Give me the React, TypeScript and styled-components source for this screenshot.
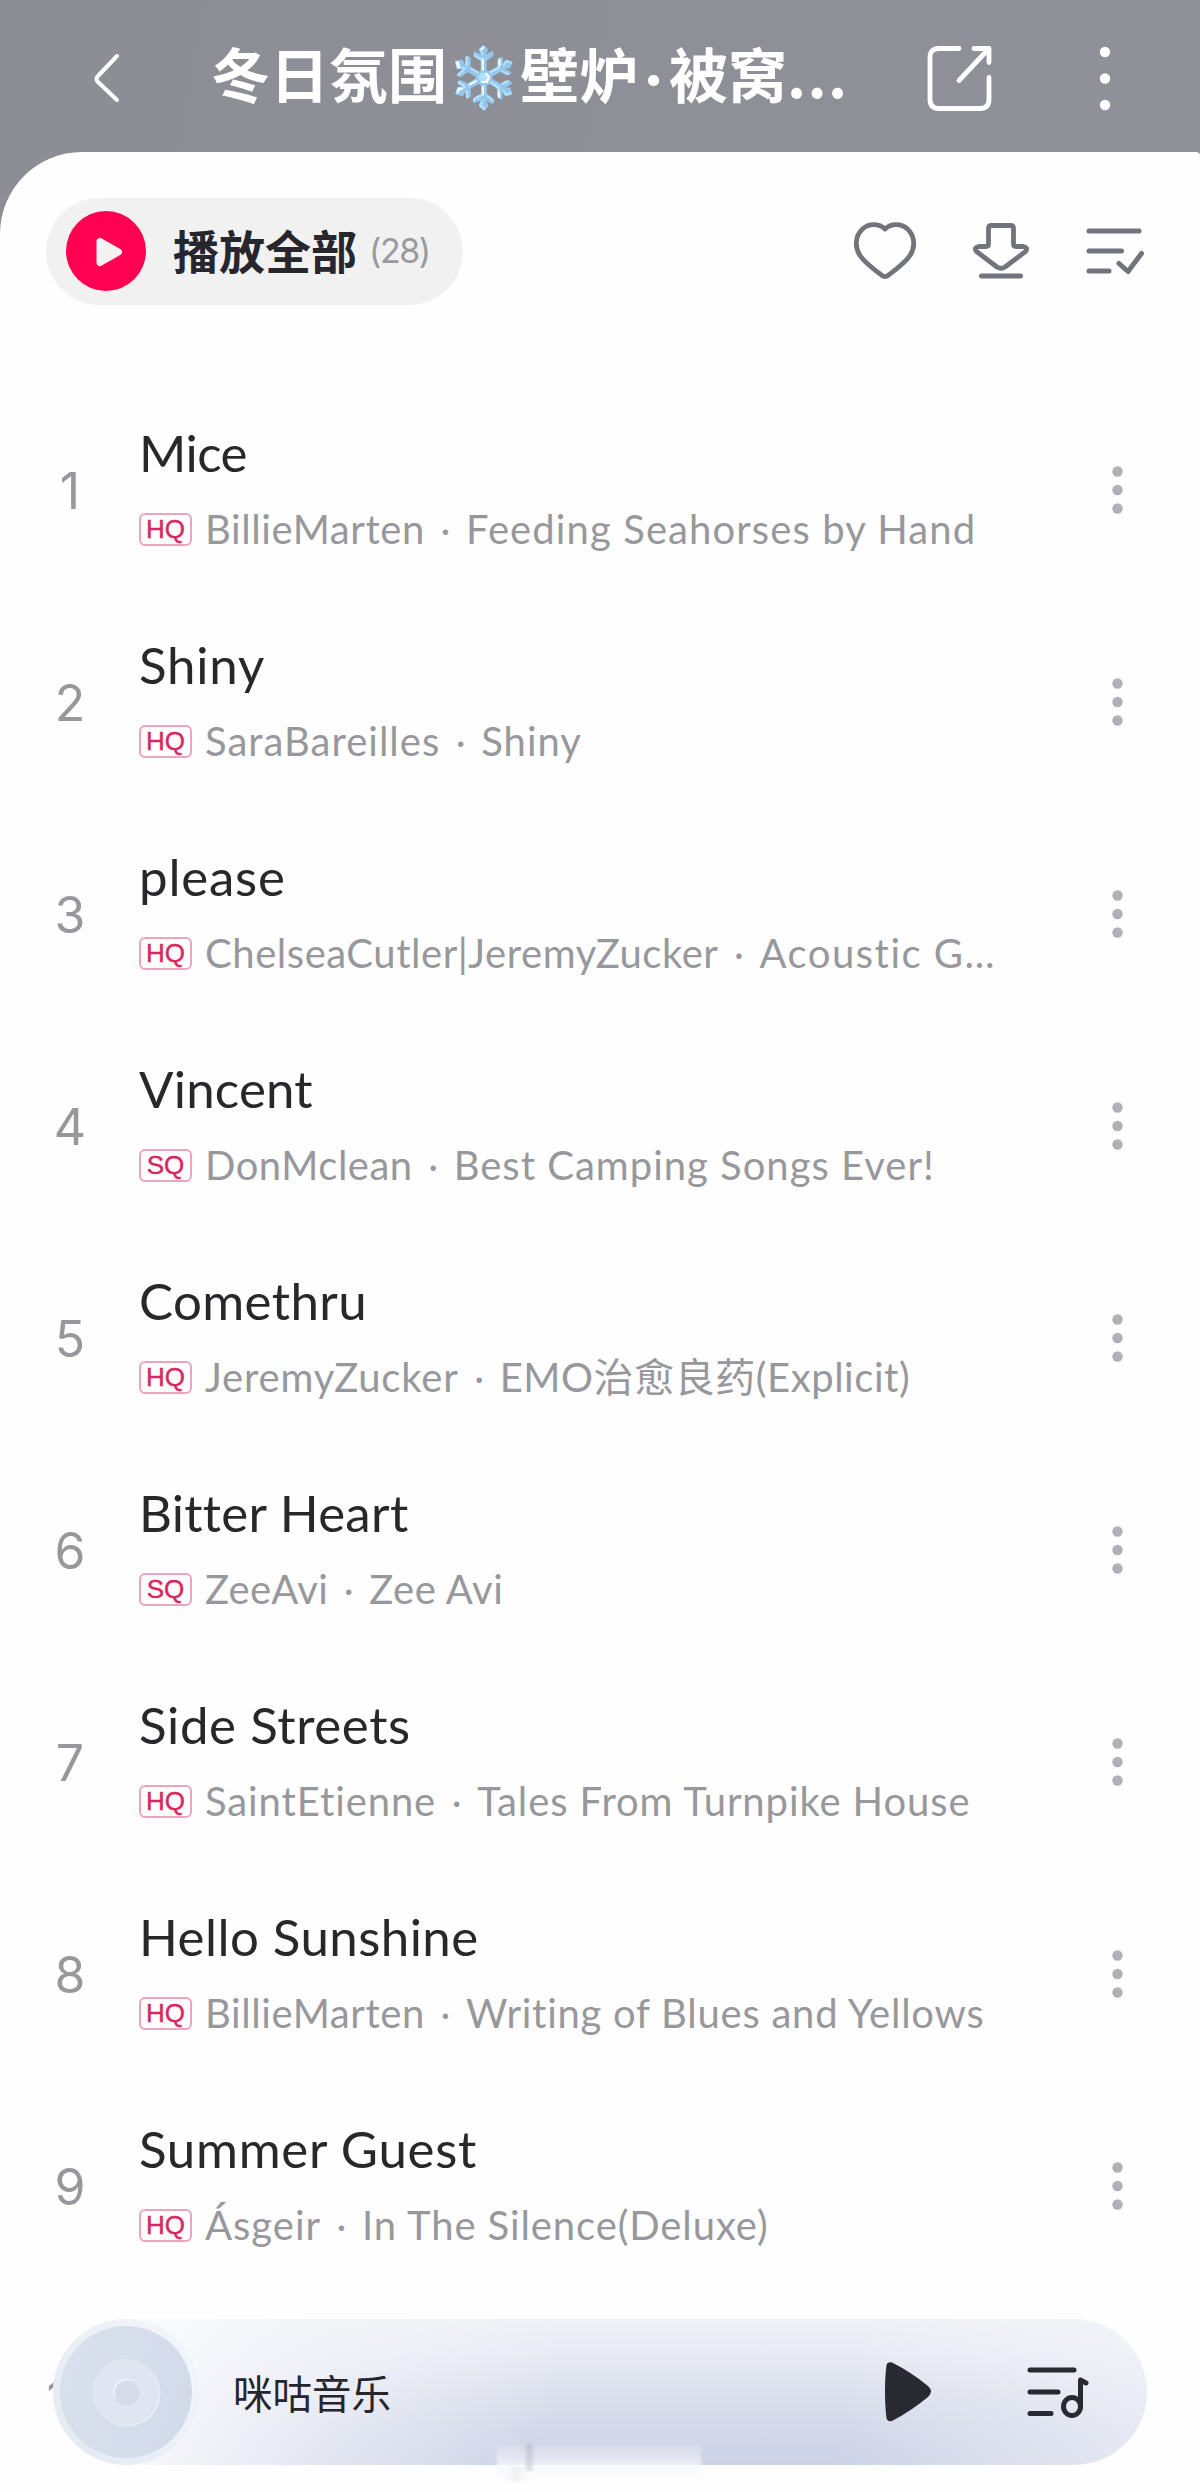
import React from "react";
import styled, { createGlobalStyle } from "styled-components";

const latin = `Lato, "Noto Sans CJK SC", sans-serif`;
const cjk = `"Noto Sans CJK SC", sans-serif`;

const Global = createGlobalStyle`
  *, *::before, *::after { box-sizing: border-box; }
  body { margin: 0; background: #fefefe; }
`;

const Screen = styled.div`
  position: relative;
  display: flex;
  flex-direction: column;
  width: 1200px;
  height: 2492px;
  overflow: hidden;
  background: linear-gradient(100deg, #8d8d95 0%, #919199 100%);
`;

const Header = styled.header`
  display: flex;
  align-items: center;
  flex: none;
  height: 152px;
  padding: 4px 89px 0 90px;
`;

const HeaderTitle = styled.h1`
  flex: none;
  width: 640px;
  margin: 0 0 7px 89px;
  font: 700 59px/84px ${cjk};
  color: #fff;
  white-space: nowrap;
`;

const MiddleDot = styled.span`
  display: inline-block;
  width: 31px;
  font-family: Lato, sans-serif;
  text-align: center;
`;

const TitleEllipsis = styled.span`
  letter-spacing: 1.3px;
`;

const HeaderIcons = styled.div`
  display: flex;
  align-items: center;
  gap: 104px;
  margin-left: auto;
`;

const Sheet = styled.main`
  display: flex;
  flex-direction: column;
  flex: 1;
  background: #fefefe;
  border-radius: 82px 4px 0 0;
`;

const Toolbar = styled.div`
  display: flex;
  align-items: center;
  justify-content: space-between;
  height: 107px;
  margin-top: 46px;
  padding: 0 55px 0 46px;
`;

const PlayAll = styled.button`
  display: flex;
  align-items: center;
  width: 417px;
  height: 107px;
  padding: 0 0 2px 20px;
  border: 0;
  border-radius: 54px;
  background: #f1f1f1;
`;

const PlayAllLabel = styled.span`
  margin: 0 0 3px 27px;
  font: 700 46px/60px ${cjk};
  color: #26262c;
`;

const PlayAllCount = styled.span`
  margin-left: 12px;
  font: 400 34px/60px Inter, sans-serif;
  letter-spacing: -1.5px;
  color: #9a9a9f;
`;

const Actions = styled.div`
  display: flex;
  align-items: center;
  gap: 54px;
`;

const List = styled.ol`
  margin: 79px 0 0;
  padding: 0;
  list-style: none;
`;

const Row = styled.li`
  display: grid;
  grid-template-columns: 139px 1fr 166px;
  align-items: center;
  height: 212px;
`;

const Index = styled.span<{ $wide?: boolean }>`
  padding: 2px 0 0 ${(p) => (p.$wide ? 4 : 0)}px;
  text-align: center;
  font: 400 50px/60px Inter, sans-serif;
  letter-spacing: -1px;
  color: #97979c;
`;

const Info = styled.div`
  display: flex;
  flex-direction: column;
  gap: 21px;
  min-width: 0;
  padding-bottom: 3px;
`;

const SongTitle = styled.span<{ $track: number }>`
  font: 400 51px/60px ${latin};
  font-variant-ligatures: none;
  letter-spacing: ${(p) => p.$track}px;
  color: #28282b;
  white-space: nowrap;
`;

const Meta = styled.div`
  display: flex;
  align-items: center;
  height: 50px;
`;

const Quality = styled.span`
  display: flex;
  align-items: center;
  justify-content: center;
  flex: none;
  width: 53px;
  height: 33px;
  margin-right: 13px;
  border: 2px solid #efa3bd;
  border-radius: 6px;
  font: 400 26px/30px "Liberation Sans", sans-serif;
  color: #d8265f;
  -webkit-text-stroke: 0.4px #d8265f;
`;

const Credit = styled.span<{ $track: number }>`
  font: 400 40px/50px ${latin};
  font-variant-ligatures: none;
  letter-spacing: ${(p) => p.$track}px;
  color: #98989c;
  white-space: pre;
`;

const Separator = styled.span`
  width: 41px;
  font: 400 36px/50px ${latin};
  text-align: center;
  color: #98989c;
`;

const MoreButton = styled.span`
  display: flex;
  justify-content: center;
`;

const Player = styled.footer`
  position: absolute;
  left: 53px;
  top: 2319px;
  display: flex;
  align-items: center;
  width: 1094px;
  height: 146px;
  padding-right: 57px;
  border-radius: 73px;
  background:
    linear-gradient(100deg, #f9fafd 8%, rgba(246, 247, 251, 0.6) 24%, rgba(246, 247, 251, 0) 46%, rgba(246, 247, 251, 0) 72%, rgba(246, 247, 251, 0.6) 100%),
    linear-gradient(180deg, #eef1f5 0%, #e8ebf5 24%, #dde1ed 50%, #d3d9ea 74%, #cdd3e7 100%);
`;

const PlayerTitle = styled.span`
  margin-left: 34px;
  font: 400 39.5px/60px ${cjk};
  color: #25252b;
`;

const PlayerIcons = styled.div`
  display: flex;
  align-items: center;
  gap: 94px;
  margin-left: auto;
`;

const Smudge = styled.div`
  position: absolute;
  left: 497px;
  top: 2443px;
  width: 204px;
  height: 39px;
  background:
    linear-gradient(90deg, transparent 5%, rgba(190, 190, 196, 0.2) 9%, transparent 14%) 0 24px / 100% 15px no-repeat,
    linear-gradient(90deg, transparent 13%, rgba(140, 142, 160, 0.32) 16%, transparent 18.5%) 0 0 / 100% 28px no-repeat,
    linear-gradient(180deg, rgba(254, 254, 254, 0.05), rgba(254, 254, 254, 0.65) 56%, #f8f9fc 60%, #fdfdfe 100%);
  filter: blur(1.5px);
`;

type Song = {
  title: string;
  artist: string;
  album: string;
  quality: "HQ" | "SQ";
  /* letter spacing of the title, the artist and the album */
  track: [number, number, number];
};

const songs: Song[] = [
  { title: "Mice", artist: "BillieMarten", album: "Feeding Seahorses by Hand", quality: "HQ", track: [-0.5, 0.6, 1.1] },
  { title: "Shiny", artist: "SaraBareilles", album: "Shiny", quality: "HQ", track: [0.8, 1, 1] },
  { title: "please", artist: "ChelseaCutler|JeremyZucker", album: "Acoustic G…", quality: "HQ", track: [0.8, 0.55, 1.5] },
  { title: "Vincent", artist: "DonMclean", album: "Best Camping Songs Ever!", quality: "SQ", track: [0.2, 0.5, 1] },
  { title: "Comethru", artist: "JeremyZucker", album: "EMO治愈良药(Explicit)", quality: "HQ", track: [0.4, 0.85, 0.55] },
  { title: "Bitter Heart", artist: "ZeeAvi", album: "Zee Avi", quality: "SQ", track: [0.3, 0.4, 0.6] },
  { title: "Side Streets", artist: "SaintEtienne", album: "Tales From Turnpike House", quality: "HQ", track: [0.6, 0.9, 0.9] },
  { title: "Hello Sunshine", artist: "BillieMarten", album: "Writing of Blues and Yellows", quality: "HQ", track: [0.45, 0.6, 0.75] },
  { title: "Summer Guest", artist: "Ásgeir", album: "In The Silence(Deluxe)", quality: "HQ", track: [0.7, 1, 0.9] },
];

const MoreDots = () => (
  <svg width="12" height="48" viewBox="0 0 12 48" fill="#b0b0b8">
    <circle cx="6.500" cy="5.500" r="5.200" />
    <circle cx="6.500" cy="24" r="5.200" />
    <circle cx="6.500" cy="42.500" r="5.200" />
  </svg>
);

const Disc = () => (
  <svg width="146" height="146" viewBox="0 0 146 146">
    <defs>
      <linearGradient id="rim" x1="0" y1="1" x2="1" y2="0.2">
        <stop offset="0" stopColor="#e2e9f2" />
        <stop offset="1" stopColor="#f3f6fb" />
      </linearGradient>
      <linearGradient id="disc" x1="0" y1="0" x2="1" y2="0.4">
        <stop offset="0" stopColor="#dae1ed" />
        <stop offset="1" stopColor="#d3daea" />
      </linearGradient>
    </defs>
    <circle cx="73" cy="73" r="73" fill="url(#rim)" />
    <circle cx="73" cy="73" r="66" fill="url(#disc)" />
    <circle cx="74" cy="74" r="33.500" fill="#eaf1fa" />
    <circle cx="73" cy="73" r="33.500" fill="#e0e5f2" />
    <circle cx="72.500" cy="72.500" r="12.500" fill="#eff3f9" />
    <circle cx="74" cy="74" r="12.500" fill="#d5dcea" />
  </svg>
);

export default function App() {
  return (
    <Screen>
      <Global />
      <Header>
        <svg width="32" height="60" viewBox="0 0 32 60" fill="none" stroke="#fff" strokeWidth="4" strokeLinecap="round" strokeLinejoin="round">
          <path d="M27 8 L7.500 28.500 Q5.500 31 7.500 33.500 L27 52" />
        </svg>
        <HeaderTitle>
          冬日氛围❄️壁炉<MiddleDot>·</MiddleDot>被窝<TitleEllipsis>...</TitleEllipsis>
        </HeaderTitle>
        <HeaderIcons>
          <svg width="68" height="68" viewBox="0 0 68 68" fill="none" stroke="#fff" strokeWidth="4.800" strokeLinecap="round" strokeLinejoin="round">
            <path d="M32 4.500 H12 Q3 4.500 3 13.500 V55.500 Q3 64.500 12 64.500 H53 Q62 64.500 62 55.500 V33.500" />
            <path d="M47 4.500 H62 V18.500 M61 5.500 L32 36.500" />
          </svg>
          <svg width="12" height="68" viewBox="0 0 12 68" fill="#fff">
            <circle cx="6" cy="8" r="5.200" />
            <circle cx="6" cy="34.500" r="5.200" />
            <circle cx="6" cy="61" r="5.200" />
          </svg>
        </HeaderIcons>
      </Header>
      <Sheet>
        <Toolbar>
          <PlayAll>
            <svg width="80" height="80" viewBox="0 0 80 80">
              <circle cx="40" cy="40" r="40" fill="#ff0053" />
              <path d="M34 30.500 L52.500 41 L34 51.500 Z" fill="#f5f1f3" stroke="#f5f1f3" strokeWidth="7" strokeLinejoin="round" />
            </svg>
            <PlayAllLabel>播放全部</PlayAllLabel>
            <PlayAllCount>(28)</PlayAllCount>
          </PlayAll>
          <Actions>
            <svg width="66" height="65" viewBox="0 0 66 65" fill="none" stroke="#73737b" strokeWidth="4.800" strokeLinejoin="round">
              <path d="M34 10 C28 4 17.500 4.200 11.500 10 C4 17 3.500 28 9 36.500 C13.500 43.500 23 50.500 31 56.500 Q34 58.500 37 56.500 C45 50.500 54.500 43.500 59 36.500 C64.500 28 64 17 56.500 10 C50.500 4.200 40 4 34 10 Z" />
            </svg>
            <svg width="60" height="65" viewBox="0 0 60 65" fill="none" stroke="#73737b" strokeWidth="4.800" strokeLinecap="round" strokeLinejoin="round">
              <path d="M20.500 6.500 Q17.500 6.500 17.500 9.500 V25 Q17.500 27.500 15 27.500 H7.500 Q2.500 28.500 5.500 32.500 L26 48 Q30 50.500 34 48 L54.500 32.500 Q57.500 28.500 52.500 27.500 H45 Q42.500 27.500 42.500 25 V9.500 Q42.500 6.500 39.500 6.500 Z" />
              <path d="M10.500 57 H49.500" strokeWidth="5" />
            </svg>
            <svg width="60" height="65" viewBox="0 0 60 65" fill="none" stroke="#73737b" strokeWidth="5" strokeLinecap="round" strokeLinejoin="round">
              <path d="M4 12 H54 M4 32 H36.500 M4 52 H24 M34 44.500 L43 52.500 L56.500 34.500" />
            </svg>
          </Actions>
        </Toolbar>
        <List>
          {songs.map((s, i) => (
            <Row key={s.title}>
              <Index>{i + 1}</Index>
              <Info>
                <SongTitle $track={s.track[0]}>{s.title}</SongTitle>
                <Meta>
                  <Quality>{s.quality}</Quality>
                  <Credit $track={s.track[1]}>{s.artist}</Credit>
                  <Separator>·</Separator>
                  <Credit $track={s.track[2]}>{s.album}</Credit>
                </Meta>
              </Info>
              <MoreButton>
                <MoreDots />
              </MoreButton>
            </Row>
          ))}
          <Row>
            <Index $wide>10</Index>
          </Row>
        </List>
      </Sheet>
      <Player>
        <Disc />
        <PlayerTitle>咪咕音乐</PlayerTitle>
        <PlayerIcons>
          <svg width="48" height="60" viewBox="0 0 48 60" fill="#292a31">
            <path d="M1 29.500 Q1 14 2.500 3 Q3.500 -0.500 8 0.500 Q27 10 44 24 Q50 29.500 44 35 Q27 49 8 59 Q3.500 60 2.500 56 Q1 45 1 29.500 Z" />
          </svg>
          <svg width="64" height="60" viewBox="0 0 64 60" fill="none" stroke="#292a31" strokeWidth="5" strokeLinecap="round" strokeLinejoin="round">
            <path d="M4 8 H48 M4 30 H32 M4 51.500 H25" />
            <ellipse cx="46" cy="44.500" rx="8.500" ry="9" />
            <path d="M54.500 45 V18 L60 21" />
          </svg>
        </PlayerIcons>
      </Player>
      <Smudge />
    </Screen>
  );
}
